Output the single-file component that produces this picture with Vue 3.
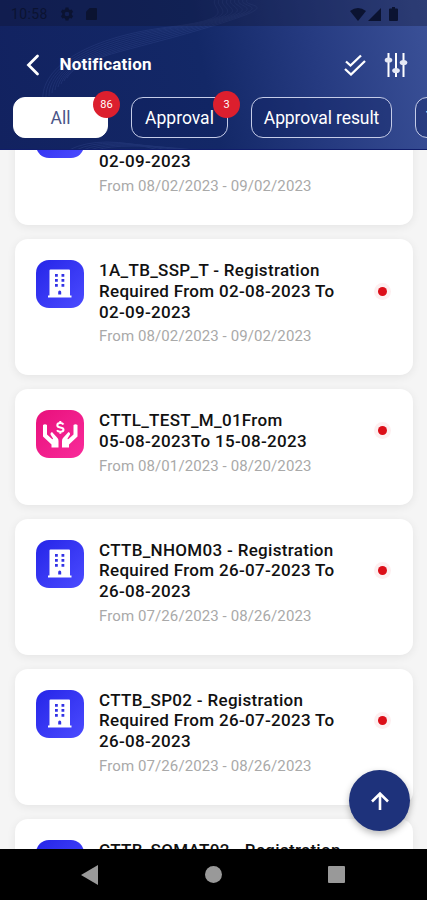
<script setup>
import { ref } from "vue"

const tabs = [
    { label : "All", count : 86, name : "all" },
    { label : "Approval", count : 3, name : "approval" },
    { label : "Approval result", count : 0, name : "result" },
    { label : "T", count : 0, name : "other" }
]

const activeTab = ref("all")

const notifications = [
    { id : 1, type : "company", lines : ["1A_TB_SSP_T - Registration", "Required From 02-08-2023 To", "02-09-2023"], period : "From 08/02/2023 - 09/02/2023" },
    { id : 2, type : "company", lines : ["1A_TB_SSP_T - Registration", "Required From 02-08-2023 To", "02-09-2023"], period : "From 08/02/2023 - 09/02/2023" },
    { id : 3, type : "benefit", lines : ["CTTL_TEST_M_01From", "05-08-2023To 15-08-2023"], period : "From 08/01/2023 - 08/20/2023" },
    { id : 4, type : "company", lines : ["CTTB_NHOM03 - Registration", "Required From 26-07-2023 To", "26-08-2023"], period : "From 07/26/2023 - 08/26/2023" },
    { id : 5, type : "company", lines : ["CTTB_SP02 - Registration", "Required From 26-07-2023 To", "26-08-2023"], period : "From 07/26/2023 - 08/26/2023" },
    { id : 6, type : "company", lines : ["CTTB_SOMAT02 - Registration", "Required From 26-07-2023 To", "26-08-2023"], period : "From 07/26/2023 - 08/26/2023" }
]
</script>


<template>
    <div class="screen">
        <header class="header">
            <svg class="waves" viewBox="0 0 427 150" fill="none" stroke="#7d94e8">
                <path v-for="n in 9" :key="n" :d="`M${40 + n * 3} ${105 - n * 3}C${34 + n * 5} ${66 - n} ${90 + n * 4} ${34 + n * 2} ${164 + n * 5} 27S${205 + n * 4} 8 ${211 + n * 4} 0`" />
                <path v-for="n in 5" :key="'b' + n" :d="`M${62 + n * 7} 150Q${95 + n * 5} ${132 + n * 2} ${150 + n * 9} 150`" />
            </svg>
            <div class="status">
                <span class="clock">10:58</span>
                <svg class="gear" viewBox="0 0 24 24"><path fill-rule="evenodd" d="M9.5 1h5l.6 3 2 1.2 3-1 2.4 4.2-2.3 2v3.2l2.3 2-2.4 4.2-3-1-2 1.2-.6 3.2h-5l-.6-3.2-2-1.2-3 1-2.4-4.2 2.3-2v-3.2l-2.3-2 2.4-4.2 3 1 2-1.2zM12 8a4 4 0 1 0 0 8 4 4 0 0 0 0-8z" /></svg>
                <svg class="card-icon" viewBox="0 0 12 13"><path d="M4 0h7a1 1 0 0 1 1 1v11a1 1 0 0 1-1 1H1a1 1 0 0 1-1-1V4z" /></svg>
                <div class="status-right">
                    <svg width="16" height="13" viewBox="0 0 16 13"><path d="M0 3Q8-3 16 3L8 13z" /></svg>
                    <svg width="13" height="13" viewBox="0 0 13 13"><path d="M13 0v13H0z" /></svg>
                    <svg class="battery" width="9" height="14" viewBox="0 0 9 14"><path d="M3 0h3v1.5h2q1 0 1 1V13q0 1-1 1H1q-1 0-1-1V2.5q0-1 1-1h2z" /></svg>
                </div>
            </div>
            <div class="bar">
                <svg class="back" viewBox="0 0 14 22"><path d="M11.5 2L2.5 11l9 9" /></svg>
                <h1>Notification</h1>
                <svg class="checks" viewBox="0 0 22 22"><path d="M2 7.5l4.5 4L17 1.5M1 15l6 5.5L21 7" /></svg>
                <svg class="filter" viewBox="0 0 24 26">
                    <path d="M4.5 1v24M12 1v24M19.5 1v24" />
                    <ellipse cx="4.5" cy="8" rx="3.8" ry="2.6" />
                    <ellipse cx="12" cy="18.5" rx="3.8" ry="2.6" />
                    <ellipse cx="19.5" cy="10.5" rx="3.8" ry="2.6" />
                </svg>
            </div>
            <nav class="tabs">
                <button v-for="tab in tabs" :key="tab.name" class="tab" :class="[tab.name, { active : tab.name === activeTab }]" @click="activeTab = tab.name">
                    {{ tab.label }}
                    <span v-if="tab.count" class="badge">{{ tab.count }}</span>
                </button>
            </nav>
        </header>

        <main class="list">
            <article v-for="item in notifications" :key="item.id" class="card">
                <div class="icon" :class="item.type">
                    <svg v-if="item.type === 'company'" viewBox="0 0 48 48">
                        <path fill="#fff" d="M14.5 9.5H33q1 0 1 1v25h1.5v2H12v-2h1.5v-25q0-1 1-1z" />
                        <path fill="#3333e6" d="M19 14h2.8v2.8H19zM25.5 14h2.8v2.8h-2.8zM19 19h2.8v2.8H19zM25.5 19h2.8v2.8h-2.8zM19 24h2.8v2.8H19zM25.5 24h2.8v2.8h-2.8zM22.2 34.5V32q0-1.5 1.5-1.5t1.5 1.5v2.5z" />
                    </svg>
                    <svg v-else viewBox="0 0 48 48">
                        <g fill="#fff">
                            <path d="M7 15q2-1.5 4 0v9.5l5 4.5q1 .5 1-.5l-2.5-4q-.5-2 1.5-2.5l5.5 6q1 1 1 3v6.5h-7v-3L7 26.5z" />
                            <path d="M41.5 15q-2-1.5-4 0v9.5l-5 4.5q-1 .5-1-.5l2.5-4q.5-2-1.5-2.5l-5.5 6q-1 1-1 3v6.5h7v-3l8.5-8z" />
                        </g>
                        <path d="M27.5 14.5q-1-1.5-3.2-1.5-3 0-3 2.2 0 1.8 3 2.2 3.2.4 3.2 2.4t-3.2 2q-2.3 0-3.3-1.5M24.3 11v2M24.3 21.8v2" fill="none" stroke="#fff" stroke-width="2" />
                    </svg>
                </div>
                <div class="body">
                    <div class="title-row">
                        <h2><span v-for="line in item.lines" :key="line">{{ line }}</span></h2>
                        <i class="dot"></i>
                    </div>
                    <p>{{ item.period }}</p>
                </div>
            </article>
            <button class="to-top" aria-label="Scroll to top">
                <svg viewBox="0 0 20 20"><path d="M10 19V2.5M2 10.5l8-8 8 8" /></svg>
            </button>
        </main>

        <footer class="navbar">
            <svg width="17" height="20" viewBox="0 0 17 20"><path d="M17 0v20L0 10z" /></svg>
            <svg width="17" height="17" viewBox="0 0 17 17"><circle cx="8.5" cy="8.5" r="8.5" /></svg>
            <svg width="17" height="17" viewBox="0 0 17 17"><rect width="17" height="17" rx="1" /></svg>
        </footer>
    </div>
</template>


<style>
body {
    margin: 0;
}
</style>

<style scoped>
.screen {
    display: flex;
    flex-direction: column;
    width: 427px;
    height: 900px;
    overflow: hidden;
    font-family: Roboto, sans-serif;
    background: #f5f5f5;
}
.header {
    position: relative;
    flex: none;
    height: 150px;
    box-sizing: border-box;
    overflow: hidden;
    background: linear-gradient(78deg, #122260 0%, #132867 48%, #253a80 72%, #3b5198 100%);
    border-bottom: 1px solid #101d6b;
}
.waves {
    position: absolute;
    inset: 0;
    width: 427px;
    height: 150px;
    opacity: 0.11;
}
.status {
    position: relative;
    display: flex;
    align-items: center;
    height: 26px;
    padding: 2px 29px 0 11px;
    box-sizing: border-box;
    background: rgba(15, 20, 45, 0.32);
    color: #0b1331;
    fill: #0b1331;
}
.clock {
    width: 49px;
    font-size: 14px;
    letter-spacing: 0.4px;
}
.gear {
    width: 14px;
    height: 14px;
}
.card-icon {
    width: 11px;
    height: 12px;
    margin-left: 12px;
}
.status-right {
    display: flex;
    align-items: center;
    gap: 2px;
    margin-left: auto;
}
.battery {
    margin-left: 6px;
}
.bar {
    position: relative;
    display: flex;
    align-items: center;
    height: 72px;
    padding: 5px 19px 0 26px;
    box-sizing: border-box;
}
.bar svg {
    fill: none;
    stroke: #fff;
}
.back {
    width: 14px;
    height: 22px;
    stroke-width: 2.8;
    stroke-linecap: round;
}
h1 {
    flex: 1;
    margin: -1px 0 0 19.5px;
    color: #fff;
    font-size: 17px;
    line-height: 22px;
    font-weight: 700;
    letter-spacing: 0.2px;
}
.checks {
    width: 22px;
    height: 22px;
    stroke-width: 2.3;
}
.filter {
    width: 24px;
    height: 26px;
    margin-left: 18px;
    stroke-width: 2;
}
.bar .filter ellipse {
    fill: #e5e8f5;
    stroke: none;
}
.tabs {
    position: relative;
    display: flex;
    gap: 23px;
    padding-left: 13px;
}
.tab {
    position: relative;
    flex: none;
    height: 41px;
    margin-top: -1px;
    padding: 0;
    box-sizing: border-box;
    border: 1.5px solid #c5cce8;
    border-radius: 12px;
    background: rgba(15, 31, 95, 0.35);
    color: #fff;
    font-family: inherit;
    font-size: 17.5px;
}
.tab.active {
    background: #fff;
    border-color: #fff;
    color: #4a5588;
}
.all {
    width: 95px;
}
.approval {
    width: 97px;
}
.result {
    width: 141px;
    letter-spacing: -0.1px;
}
.other {
    width: 110px;
    padding-left: 10px;
    text-align: left;
}
.badge {
    position: absolute;
    top: -7px;
    right: -13px;
    width: 27px;
    height: 27px;
    border-radius: 50%;
    background: #dc1f2e;
    color: #fff;
    font-size: 11px;
    line-height: 27px;
    text-align: center;
}
.list {
    position: relative;
    flex: 1;
    min-height: 0;
    overflow: hidden;
    padding: 0 14px 0 15px;
}
.card {
    display: flex;
    margin-bottom: 14px;
    padding: 21px 21px 28px;
    border-radius: 13px;
    background: #fff;
    box-shadow: 0 2px 10px rgba(0, 0, 0, 0.07);
}
.card:first-child {
    margin-top: -61px;
}
.icon {
    flex: none;
    width: 48px;
    height: 48px;
    border-radius: 13px;
}
.icon svg {
    display: block;
}
.company {
    background: linear-gradient(135deg, #2525e8, #4b4bff);
}
.benefit {
    background: linear-gradient(135deg, #e8107c, #f92b9a);
}
.body {
    flex: 1;
    margin-left: 15px;
}
.title-row {
    display: flex;
    align-items: center;
    justify-content: space-between;
}
h2 {
    margin: 0;
    color: #111;
    font-size: 17px;
    font-weight: 500;
    line-height: 20.7px;
    letter-spacing: 0.31px;
}
h2 span {
    display: block;
    white-space: nowrap;
}
.dot {
    width: 9px;
    height: 9px;
    margin-right: 5px;
    border-radius: 50%;
    background: #dc0e18;
    box-shadow: 0 0 0 4px #fdeff0;
}
p {
    height: 22px;
    margin: 3px 0 0;
    color: #a9a9a9;
    font-size: 15px;
    line-height: 23px;
    letter-spacing: 0.1px;
}
.to-top {
    position: absolute;
    right: 17px;
    bottom: 18px;
    display: flex;
    align-items: center;
    justify-content: center;
    width: 61px;
    height: 61px;
    padding: 0;
    border: none;
    border-radius: 50%;
    background: #1e327b;
    box-shadow: 0 3px 7px rgba(0, 0, 0, 0.28);
}
.to-top svg {
    width: 20px;
    height: 20px;
    fill: none;
    stroke: #fff;
    stroke-width: 2.6;
}
.navbar {
    display: flex;
    align-items: center;
    justify-content: space-between;
    flex: none;
    height: 51px;
    padding: 0 82px 0 81px;
    box-sizing: border-box;
    background: #000;
    fill: #999;
}
</style>
